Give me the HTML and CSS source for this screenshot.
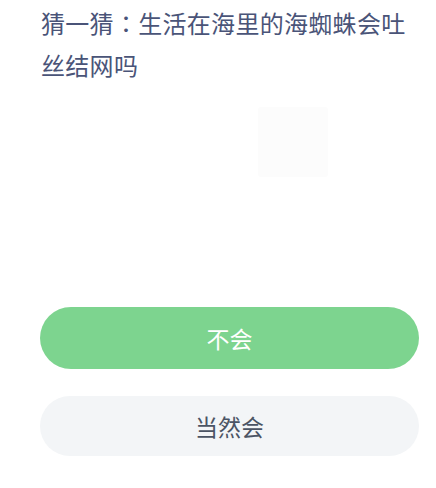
FILE: index.html
```html
<!DOCTYPE html>
<html lang="zh">
<head>
<meta charset="utf-8">
<link rel="stylesheet" href="styles.css">
</head>
<body>
<div class="page">
  <h1 class="question">猜一猜<span class="colon" lang="zh-TW">：</span>生活在海里的海蜘蛛会吐丝结网吗</h1>
  <div class="picture">
    <div class="thumb"></div>
  </div>
  <div class="answers">
    <button class="answer answer-primary">不会</button>
    <button class="answer answer-secondary">当然会</button>
  </div>
</div>
</body>
</html>
```
FILE: styles.css
```css
html, body {
  margin: 0;
  padding: 0;
  background: #ffffff;
}
.page {
  width: 436px;
  height: 488px;
  padding: 2px 17px 0 41px;
  box-sizing: border-box;
  font-family: "Noto Sans CJK SC", "Noto Sans", sans-serif;
}
.question {
  margin: 0;
  font-size: 24px;
  font-weight: 400;
  line-height: 42px;
  color: #4a5478;
  letter-spacing: 0.3px;
}
.colon {
  font-family: "Noto Sans CJK TC", "Noto Sans CJK JP", "Noto Sans CJK SC", sans-serif;
  font-feature-settings: "locl" 1;
}
.picture {
  height: 221px;
  display: flex;
  justify-content: flex-start;
  padding: 21px 0 0 217px;
  box-sizing: border-box;
}
.thumb {
  width: 70px;
  height: 70px;
  background: #fcfcfc;
  border-radius: 3px;
}
.answers {
  display: flex;
  flex-direction: column;
  gap: 27px;
  margin-left: -1px;
}
.answer {
  display: block;
  width: 379px;
  border: none;
  border-radius: 31px;
  font-family: "Noto Sans CJK SC", "Noto Sans", sans-serif;
  font-size: 23px;
  padding: 0;
}
.answer-primary {
  height: 62px;
  background: #7dd48f;
  color: #ffffff;
}
.answer-secondary {
  height: 60px;
  background: #f3f5f7;
  color: #4b5464;
}
```
